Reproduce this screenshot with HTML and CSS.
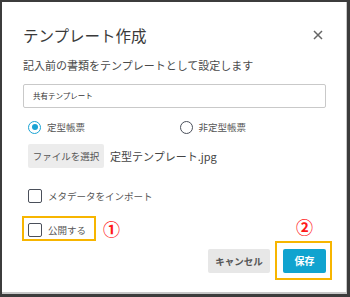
FILE: index.html
```html
<!DOCTYPE html>
<html lang="ja">

<head>
    <meta charset="UTF-8">
    <meta name="viewport" content="width=device-width, initial-scale=1.0">
    <title>テンプレート作成</title>
    <link rel="stylesheet" href="styles.css">
</head>

<body>
    <div class="frame">
        <div class="dialog">
            <div class="head">
                <h1 class="title">テンプレート作成</h1>
                <svg class="close" width="10" height="10" viewBox="0 0 10 10">
                    <path d="M1 1L9 9M9 1L1 9" stroke="#666" stroke-width="1.5" fill="none" />
                </svg>
            </div>
            <p class="lead">記入前の書類をテンプレートとして設定します</p>
            <div class="field">共有テンプレート</div>
            <div class="radios">
                <label class="radio"><span class="dot on"></span>定型帳票</label>
                <label class="radio"><span class="dot"></span>非定型帳票</label>
            </div>
            <div class="file">
                <span class="file-btn">ファイルを選択</span>
                <span class="file-name">定型テンプレート.jpg</span>
            </div>
            <label class="check first"><span class="box"></span>メタデータをインポート</label>
            <div class="mark-row">
                <div class="mark">
                    <label class="check"><span class="box"></span>公開する</label>
                </div>
                <span class="num">①</span>
            </div>
            <div class="foot">
                <span class="btn cancel">キャンセル</span>
                <div class="mark save-mark">
                    <span class="num num2">②</span>
                    <span class="btn save">保存</span>
                </div>
            </div>
        </div>
    </div>
</body>

</html>
```

FILE: styles.css
```css
* {
    margin: 0;
    padding: 0;
    box-sizing: border-box;
}
body {
    width: 350px;
    height: 297px;
    font-family: "Noto Sans CJK JP", "Noto Sans", sans-serif;
    color: #555;
    background: #3c3c3c;
}
.frame {
    height: 297px;
    border-style: solid;
    border-color: #3c3c3c;
    border-width: 2px 3px 3px 2px;
    background: #fff;
    box-shadow: inset -1px -2px 0 #c8c8c8;
}
.dialog {
    padding: 23px 21px 0 21px;
}
.head {
    display: flex;
    justify-content: space-between;
    align-items: center;
    height: 20px;
}
.title {
    font-size: 15.5px;
    font-weight: normal;
    line-height: 20px;
    color: #3a3a3a;
}
.close {
    margin-right: 3px;
}
.lead {
    margin-top: 12px;
    font-size: 11px;
    line-height: 16px;
    color: #4a4a4a;
}
.field {
    margin-top: 11px;
    height: 24px;
    border: 1px solid #c9c9c9;
    border-radius: 2px;
    padding-left: 9px;
    font-size: 7.5px;
    line-height: 22px;
    color: #333;
}
.radios {
    margin-top: 11px;
    display: grid;
    grid-template-columns: 1fr 1fr;
    height: 16px;
}
.radio {
    display: flex;
    align-items: center;
    gap: 6px;
    padding-left: 5px;
    font-size: 9.5px;
    color: #555;
}
.dot {
    width: 13px;
    height: 13px;
    border: 1.5px solid #4a4f5a;
    border-radius: 50%;
    display: flex;
    align-items: center;
    justify-content: center;
}
.dot.on {
    border-color: #1aa3d4;
}
.dot.on::after {
    content: "";
    width: 6px;
    height: 6px;
    border-radius: 50%;
    background: #1aa3d4;
}
.file {
    margin-top: 9px;
    display: flex;
    align-items: center;
    gap: 6px;
    padding-left: 5px;
    height: 24px;
}
.file-btn {
    height: 24px;
    width: 76px;
    background: #ececec;
    border-radius: 2px;
    font-size: 9.5px;
    line-height: 24px;
    text-align: center;
    color: #555;
}
.file-name {
    font-size: 11px;
    color: #444;
}
.check {
    display: flex;
    align-items: center;
    gap: 6px;
    height: 16px;
    font-size: 9.5px;
    color: #555;
}
.check.first {
    margin-top: 20px;
    padding-left: 5px;
}
.box {
    width: 14px;
    height: 14px;
    border: 1.5px solid #4a4f5a;
    border-radius: 2px;
}
.mark-row {
    margin-top: 12px;
    display: flex;
    align-items: center;
    gap: 7px;
    margin-left: -1px;
}
.mark {
    border: 2px solid #f7b500;
}
.mark-row .mark {
    height: 25px;
    padding: 2px 8px 0 4px;
    display: flex;
    align-items: center;
}
.num {
    color: #ff1a1a;
    font-size: 17px;
    font-weight: bold;
    line-height: 20px;
}
.foot {
    display: flex;
    justify-content: flex-end;
    align-items: center;
    gap: 5px;
    margin-right: -6px;
}
.save-mark {
    position: relative;
    padding: 6px 4px 5px 6px;
}
.num2 {
    position: absolute;
    left: 19px;
    top: -26px;
}
.btn {
    display: block;
    height: 24px;
    border-radius: 2px;
    font-weight: bold;
    line-height: 24px;
    text-align: center;
}
.cancel {
    width: 62px;
    background: #e7e7e7;
    color: #555;
    font-size: 9.5px;
}
.save {
    width: 43px;
    background: #10a3cf;
    color: #fff;
    font-size: 10px;
}
```
